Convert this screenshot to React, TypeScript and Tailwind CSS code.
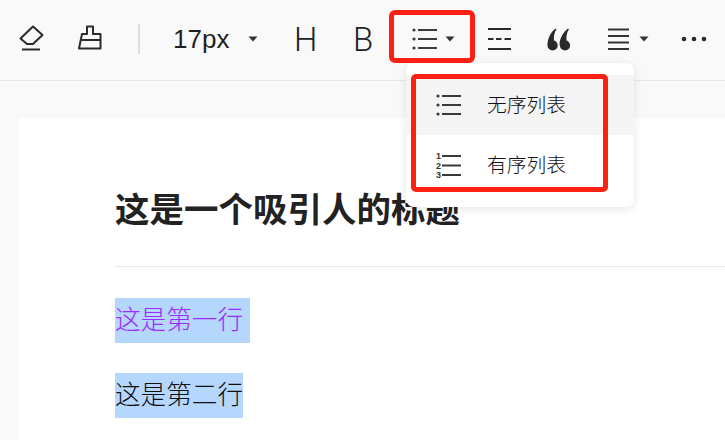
import React from "react";

const cjk = { fontFamily: '"Liberation Sans", "Noto Sans CJK SC", sans-serif' };

const Caret = () => (
  <svg width="10" height="6" viewBox="0 0 10 6" className="shrink-0">
    <path d="M0.5 0.5h9L5 5.5z" fill="#333" />
  </svg>
);

const BulletIcon = () => (
  <svg width="25" height="22" viewBox="0 0 25 22" fill="none" stroke="#3a3a3a" strokeWidth="2">
    <path d="M6 2h19M6 11h19M6 20h19" />
    <circle cx="2" cy="2" r="1.6" fill="#3a3a3a" stroke="none" />
    <circle cx="2" cy="11" r="1.6" fill="#3a3a3a" stroke="none" />
    <circle cx="2" cy="20" r="1.6" fill="#3a3a3a" stroke="none" />
  </svg>
);

const App: React.FC = () => {
  return (
    <div className="relative w-[725px] h-[440px] overflow-hidden bg-[#f9f9f9] text-[#222]" style={cjk}>
      {/* toolbar */}
      <div className="flex h-[81px] items-center border-b border-[#e8e8e8] pl-[19px] pb-[2px]">
        <div className="flex w-[59px] items-center">
          <svg width="25" height="26" viewBox="0 0 25 26" fill="none" stroke="#2a2a2a" strokeWidth="2" strokeLinejoin="round" className="mb-[3px]">
            <path d="M14 1.5 23.5 10 14 19H8L1.5 13.5z" />
            <path d="M3 24.5h18" />
          </svg>
        </div>
        <div className="flex w-[60px] items-center">
          <svg width="24" height="25" viewBox="0 0 24 25" fill="none" stroke="#2a2a2a" strokeWidth="2" strokeLinejoin="round" className="mb-[3px]">
            <path d="M1 23.5 4 9H9V1.5H15V9H22.5V23.5z" />
            <path d="M3.5 15H22.5" />
          </svg>
        </div>
        <div className="h-[30px] w-[2px] bg-[#dcdcdc]" />
        <div className="ml-[33px] flex w-[121px] items-center">
          <span className="w-[75px] text-[26px] leading-none text-[#1f1f1f]">17px</span>
          <Caret />
        </div>
        <span className="w-[59px] text-[33px] font-light leading-none text-[#222]" style={{ fontFamily: "Roboto, sans-serif" }}>H</span>
        <span className="w-[59px] text-[33px] font-light leading-none text-[#222]" style={{ fontFamily: "Roboto, sans-serif" }}>B</span>
        <div className="flex w-[76px] items-center gap-[8px]">
          <BulletIcon />
          <Caret />
        </div>
        <div className="flex w-[59px] items-center">
          <svg width="23" height="24" viewBox="0 0 23 24" fill="none" stroke="#2a2a2a" strokeWidth="2">
            <path d="M0 2h23M0 22h23" />
            <path d="M0 12h5.5M8 12h5.5M16.5 12h6.5" />
          </svg>
        </div>
        <div className="flex w-[61px] items-center">
          <svg width="24" height="23" viewBox="0 0 24 23" fill="#2a2a2a">
            <path d="M0.5 17C0.5 10 4 4 8.5 0.5L9.5 1.3C7.5 4 6.5 8 7 12.3z" />
            <circle cx="5.6" cy="17.4" r="5.1" />
            <path d="M12.5 17C12.5 10 16.5 4 21 0.5L22 1.3C20 4 19 8 19.5 12.3z" />
            <circle cx="18" cy="17.4" r="5.1" />
          </svg>
        </div>
        <div className="flex w-[73px] items-center gap-[9px]">
          <svg width="22" height="22" viewBox="0 0 22 22" fill="none" stroke="#333" strokeWidth="2">
            <path d="M0 1.5h21M0 8h21M0 14.5h21M0 21h21" />
          </svg>
          <Caret />
        </div>
        <svg width="26" height="6" viewBox="0 0 26 6" fill="#2a2a2a">
          <circle cx="3" cy="3" r="2.3" />
          <circle cx="13" cy="3" r="2.3" />
          <circle cx="23" cy="3" r="2.3" />
        </svg>
      </div>

      {/* page */}
      <div className="ml-[19px] mt-[37px] h-[400px] bg-white pl-[96px] pt-[70px]">
        <h1 className="text-[34.5px] font-bold leading-[44px] text-[#222] whitespace-nowrap">这是一个吸引人的标题</h1>
        <div className="mt-[34px] h-px bg-[#e8e8e8]" />
        <div className="mt-[31px] flex flex-col items-start gap-[30px] text-[25.6px] font-light leading-[45px]">
          <p className="bg-[#b5d6fd] pr-[7px] text-[#9a2cff]">这是第一行</p>
          <p className="bg-[#b5d6fd] text-[#111]">这是第二行</p>
        </div>
      </div>

      {/* dropdown */}
      <div className="absolute left-[406px] top-[63px] w-[228px] rounded-[8px] bg-white py-[12px] shadow-[0_2px_10px_rgba(0,0,0,0.1)]">
        <div className="flex h-[60px] items-center bg-[#f4f4f4] pl-[30px]">
          <BulletIcon />
          <span className="ml-[26px] pt-[1px] text-[19.8px] font-light text-[#111]">无序列表</span>
        </div>
        <div className="flex h-[60px] items-center pl-[30px]">
          <svg width="25" height="28" viewBox="0 0 25 28" fill="none" stroke="#3a3a3a" strokeWidth="2">
            <path d="M6 5h19M6 14.5h19M6 24h19" />
            <g fill="#333" stroke="none" fontSize="9" fontWeight="700" fontFamily="Liberation Sans, sans-serif">
              <text x="0" y="8">1</text>
              <text x="0" y="17.5">2</text>
              <text x="0" y="27">3</text>
            </g>
          </svg>
          <span className="ml-[26px] pt-[1px] text-[19.8px] font-light text-[#111]">有序列表</span>
        </div>
      </div>

      {/* red annotation boxes */}
      <div className="absolute left-[389px] top-[10px] h-[53px] w-[86px] rounded-[6px] border-[5px] border-[#fb2012]" />
      <div className="absolute left-[411px] top-[74px] h-[118px] w-[197px] rounded-[5px] border-[5px] border-[#fb2012]" />
    </div>
  );
};

export default App;
